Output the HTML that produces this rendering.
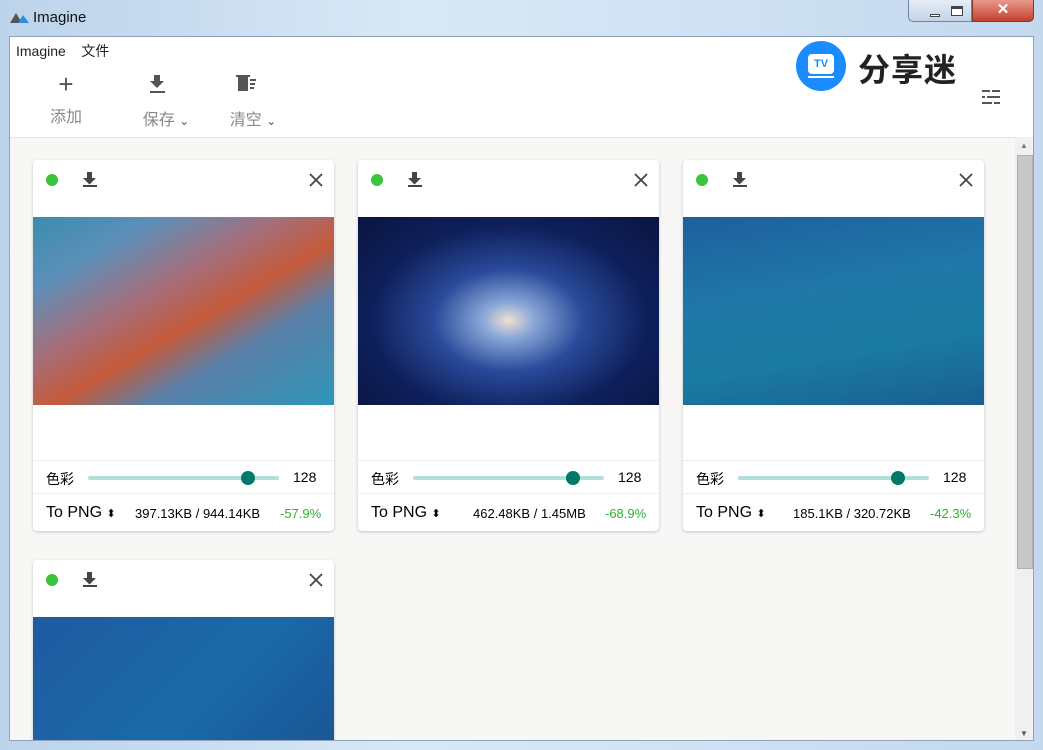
<!DOCTYPE html><html><head><meta charset="utf-8"><style>
*{margin:0;padding:0;box-sizing:border-box}
body{width:1043px;height:750px;overflow:hidden;font-family:"Liberation Sans","Noto Sans CJK SC",sans-serif;background:linear-gradient(90deg,#bcd3ea,#d9e8f6 40%,#c4d9ee);position:relative}
.title{position:absolute;left:33px;top:9px;font-size:15px;color:#111}
.win{position:absolute;left:9px;top:36px;width:1025px;height:705px;background:#fff;border:1px solid #8ea3bb;overflow:hidden}
.menu{position:absolute;left:6px;top:4px;font-size:14px;color:#222}
.tb{position:absolute;top:34px;text-align:center;color:#888;font-size:16px}
.content{position:absolute;left:0;top:100px;width:1005px;height:605px;background:#f7f7f5;border-top:1px solid #e4e4e4}
.sb{position:absolute;left:1005px;top:100px;width:19px;height:605px;background:#f0f0f0}
.card{position:absolute;width:301px;height:371px;background:#fff;border-radius:4px;box-shadow:0 1px 3px rgba(0,0,0,.2);overflow:hidden}
.dot{position:absolute;left:13px;top:14px;width:12px;height:12px;border-radius:50%;background:#3cc43c}
.x{position:absolute;right:11px;top:13px}
.img{position:absolute;left:0;top:57px;width:301px;height:188px}
.row1{position:absolute;left:0;top:300px;width:301px;height:34px;border-top:1px solid #eee;border-bottom:1px solid #eee;font-size:14px}
.row2{position:absolute;left:0;top:334px;width:301px;height:37px;font-size:13px}
</style></head><body>
<svg style="position:absolute;left:10px;top:11px" width="20" height="12"><path d="M0 12L6 2L12 12Z" fill="#555"/><path d="M8 12L13 4L19 12Z" fill="#2a8de0"/></svg>
<div class="title">Imagine</div>
<div style="position:absolute;left:908px;top:0;width:64px;height:22px;border:1px solid #6f84a0;border-top:none;border-radius:0 0 0 5px;background:linear-gradient(#e6eef8,#c3d3e6)"></div>
<div style="position:absolute;left:930px;top:14px;width:10px;height:3px;background:#fff;border:1px solid #444"></div>
<div style="position:absolute;left:951px;top:6px;width:12px;height:10px;border:1px solid #444;border-top-width:3px;background:#fff"></div>
<div style="position:absolute;left:972px;top:0;width:62px;height:22px;background:linear-gradient(#e89a8c,#c4402e);border:1px solid #7a3a30;border-top:none;border-radius:0 0 5px 0;color:#fff;text-align:center;font-size:15px;font-weight:bold;line-height:20px">✕</div>
<div class="win">
<div class="menu">Imagine&nbsp;&nbsp;&nbsp;&nbsp;文件</div>
<div class="tb" style="left:38px;width:36px"><div style="font-size:26px;color:#555;line-height:26px;font-weight:300">+</div><div style="margin-top:6px">添加</div></div>
<div class="tb" style="left:126px;width:60px"><svg width="20" height="26" style="margin-left:-16px"><path d="M6 4h6v6h4l-7 7-7-7h4z" fill="#555"/><rect x="2" y="20" width="15" height="2" fill="#555"/></svg><div style="margin-top:4px">保存 <span style="font-size:12px;color:#555">⌄</span></div></div>
<div class="tb" style="left:213px;width:60px"><svg width="24" height="26" style="margin-left:-16px"><rect x="5" y="6" width="10" height="14" fill="#555"/><rect x="3" y="4" width="14" height="2" fill="#555"/><rect x="17" y="8" width="6" height="2" fill="#555"/><rect x="17" y="12" width="5" height="2" fill="#555"/><rect x="17" y="16" width="4" height="2" fill="#555"/></svg><div style="margin-top:4px">清空 <span style="font-size:12px;color:#555">⌄</span></div></div>
<div style="position:absolute;left:786px;top:4px;width:50px;height:50px;border-radius:50%;background:#1a8cff"><div style="position:absolute;left:12px;top:13px;width:26px;height:20px;border-radius:4px;background:#fff;color:#1a8cff;font-size:11px;font-weight:bold;text-align:center;line-height:20px">TV</div><div style="position:absolute;left:12px;top:35px;width:26px;height:2px;background:#fff"></div></div>
<div style="position:absolute;left:848px;top:8px;font-size:32px;font-weight:bold;color:#222;letter-spacing:1px">分享迷</div>
<svg style="position:absolute;left:971px;top:50px" width="20" height="20"><g fill="#555"><rect x="1" y="3" width="18" height="2"/><rect x="1" y="9" width="18" height="2"/><rect x="1" y="15" width="18" height="2"/></g><g fill="#fff"><rect x="9" y="2" width="2" height="4"/><rect x="4" y="8" width="2" height="4"/><rect x="11" y="14" width="2" height="4"/></g></svg>
<div class="content">
<div class="card" style="left:23px;top:22px"><div class="dot"></div><svg style="position:absolute;left:48px;top:10px" width="18" height="18"><path d="M6 2h5v6h4l-6.5 6.5L2 8h4z" fill="#444"/><rect x="2" y="15" width="14" height="2" fill="#444"/></svg><svg class="x" width="14" height="14"><path d="M1 1L13 13M13 1L1 13" stroke="#444" stroke-width="1.8"/></svg>
<div class="img" style="background:linear-gradient(150deg,#3a8db0 0%,#5c8fb8 20%,#a66e7a 40%,#c45a3a 55%,#5a7fa8 70%,#2e96b8 100%)"></div>
<div class="row1"><span style="position:absolute;left:13px;top:8px">色彩</span><div style="position:absolute;left:55px;top:15px;width:191px;height:4px;background:#b2dfdb;border-radius:2px"></div><div style="position:absolute;left:208px;top:10px;width:14px;height:14px;border-radius:50%;background:#00796b"></div><span style="position:absolute;left:260px;top:8px">128</span></div>
<div class="row2"><span style="position:absolute;left:13px;top:10px;font-size:16px">To PNG <span style="font-size:11px">⬍</span></span><span style="position:absolute;left:102px;top:12px">397.13KB / 944.14KB</span><span style="position:absolute;left:247px;top:12px;color:#2bb52b">-57.9%</span></div></div>

<div class="card" style="left:348px;top:22px"><div class="dot"></div><svg style="position:absolute;left:48px;top:10px" width="18" height="18"><path d="M6 2h5v6h4l-6.5 6.5L2 8h4z" fill="#444"/><rect x="2" y="15" width="14" height="2" fill="#444"/></svg><svg class="x" width="14" height="14"><path d="M1 1L13 13M13 1L1 13" stroke="#444" stroke-width="1.8"/></svg>
<div class="img" style="background:radial-gradient(ellipse at 50% 55%,#f0e0d0 0%,#8aa8d8 12%,#2a4a9a 35%,#0e1f5a 65%,#0a1440 100%)"></div>
<div class="row1"><span style="position:absolute;left:13px;top:8px">色彩</span><div style="position:absolute;left:55px;top:15px;width:191px;height:4px;background:#b2dfdb;border-radius:2px"></div><div style="position:absolute;left:208px;top:10px;width:14px;height:14px;border-radius:50%;background:#00796b"></div><span style="position:absolute;left:260px;top:8px">128</span></div>
<div class="row2"><span style="position:absolute;left:13px;top:10px;font-size:16px">To PNG <span style="font-size:11px">⬍</span></span><span style="position:absolute;left:115px;top:12px">462.48KB / 1.45MB</span><span style="position:absolute;left:247px;top:12px;color:#2bb52b">-68.9%</span></div></div>

<div class="card" style="left:673px;top:22px"><div class="dot"></div><svg style="position:absolute;left:48px;top:10px" width="18" height="18"><path d="M6 2h5v6h4l-6.5 6.5L2 8h4z" fill="#444"/><rect x="2" y="15" width="14" height="2" fill="#444"/></svg><svg class="x" width="14" height="14"><path d="M1 1L13 13M13 1L1 13" stroke="#444" stroke-width="1.8"/></svg>
<div class="img" style="background:linear-gradient(170deg,#1e5f9e 0%,#1f78a8 40%,#1a7aa0 70%,#1a5e92 100%)"></div>
<div class="row1"><span style="position:absolute;left:13px;top:8px">色彩</span><div style="position:absolute;left:55px;top:15px;width:191px;height:4px;background:#b2dfdb;border-radius:2px"></div><div style="position:absolute;left:208px;top:10px;width:14px;height:14px;border-radius:50%;background:#00796b"></div><span style="position:absolute;left:260px;top:8px">128</span></div>
<div class="row2"><span style="position:absolute;left:13px;top:10px;font-size:16px">To PNG <span style="font-size:11px">⬍</span></span><span style="position:absolute;left:110px;top:12px">185.1KB / 320.72KB</span><span style="position:absolute;left:247px;top:12px;color:#2bb52b">-42.3%</span></div></div>

<div class="card" style="left:23px;top:422px"><div class="dot"></div><svg style="position:absolute;left:48px;top:10px" width="18" height="18"><path d="M6 2h5v6h4l-6.5 6.5L2 8h4z" fill="#444"/><rect x="2" y="15" width="14" height="2" fill="#444"/></svg><svg class="x" width="14" height="14"><path d="M1 1L13 13M13 1L1 13" stroke="#444" stroke-width="1.8"/></svg>
<div class="img" style="background:linear-gradient(135deg,#1f5aa0,#1a6aa8 50%,#1a4f90)"></div></div>
</div>
<div class="sb"><div style="position:absolute;left:2px;top:18px;width:16px;height:414px;background:#c8c8c8;border:1px solid #b0b0b0"></div><div style="position:absolute;left:5px;top:4px;font-size:8px;color:#777">▲</div><div style="position:absolute;left:5px;bottom:4px;font-size:8px;color:#555">▼</div></div>
</div>
</body></html>
